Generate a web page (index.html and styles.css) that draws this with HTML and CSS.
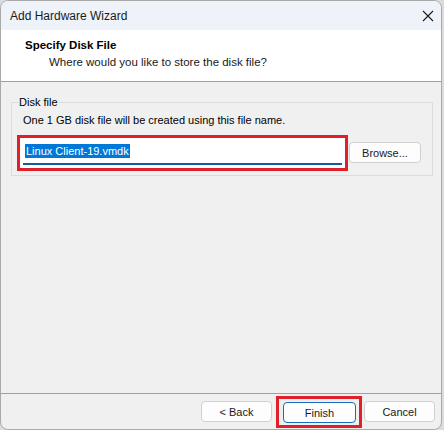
FILE: index.html
```html
<!DOCTYPE html>
<html>
<head>
<meta charset="utf-8">
<link rel="stylesheet" href="styles.css">
</head>
<body>
<div class="window">
  <div class="titlebar">
    <span class="title">Add Hardware Wizard</span>
    <svg class="close" width="12" height="12" viewBox="0 0 12 12"><path d="M1 1L11 11M11 1L1 11" stroke="#1a1a1a" stroke-width="1.1" fill="none"/></svg>
  </div>
  <div class="header">
    <div class="h-title">Specify Disk File</div>
    <div class="h-sub">Where would you like to store the disk file?</div>
  </div>
  <div class="content">
    <fieldset class="group">
      <legend>Disk file</legend>
      <div class="desc">One 1 GB disk file will be created using this file name.</div>
      <div class="row">
        <div class="mark mark-input">
          <div class="input"><span class="sel">Linux Client-19.vmdk</span></div>
        </div>
        <div class="btn browse">Browse...</div>
      </div>
    </fieldset>
  </div>
  <div class="footer">
    <div class="btn">&lt; Back</div>
    <div class="mark mark-btn"><div class="btn primary">Finish</div></div>
    <div class="btn">Cancel</div>
  </div>
</div>
</body>
</html>
```

FILE: styles.css
```css
html, body {
  margin: 0;
  padding: 0;
}
body {
  background: #dcdcdc;
  width: 444px;
  height: 430px;
  font-family: "Liberation Sans", Arial, sans-serif;
  font-size: 11px;
  color: #000;
}
.window {
  box-sizing: border-box;
  width: 442px;
  height: 430px;
  border: 1px solid #a9a9a9;
  border-radius: 8px;
  overflow: hidden;
  display: flex;
  flex-direction: column;
  background: #f0f0f0;
}
.titlebar {
  height: 29px;
  flex: none;
  background: #eef2f9;
  display: flex;
  align-items: center;
  justify-content: space-between;
  padding: 0 7px 0 9px;
}
.title {
  font-size: 12px;
  color: #1b1b1b;
}
.header {
  flex: none;
  height: 52px;
  box-sizing: border-box;
  background: #fff;
  border-bottom: 1px solid #a0a0a0;
  padding: 8px 0 0 24px;
  font-size: 11.5px;
}
.h-title {
  font-weight: bold;
  line-height: 15px;
}
.h-sub {
  padding-left: 24px;
  line-height: 16px;
  margin-top: 1px;
  color: #1a1a1a;
}
.content {
  flex: 1;
  padding: 14px 10px 0 10px;
  border-bottom: 1px solid #a0a0a0;
}
.group {
  margin: 0;
  border: 1px solid #dcdcdc;
  padding: 4px 11px 9px 10px;
  height: 80px;
  box-sizing: border-box;
}
.group legend {
  padding: 0 1px;
  margin-left: -4px;
  line-height: 12px;
}
.desc {
  line-height: 14px;
  margin-top: 1px;
  margin-left: 1px;
}
.row {
  display: flex;
  align-items: flex-start;
  margin-top: 8px;
}
.mark {
  border: 3px solid #e01f2a;
}
.mark-input {
  margin-left: -5px;
  width: 319px;
  height: 29px;
  padding: 1px 3px 0 3px;
  box-sizing: content-box;
  background: #fff;
}
.input {
  box-sizing: border-box;
  height: 26px;
  background: #fff;
  border-bottom: 2px solid #0e5ea5;
  border-radius: 3px 3px 0 0;
  display: flex;
  align-items: center;
  padding-left: 2px;
}
.sel {
  background: #0078d7;
  color: #fff;
  line-height: 14px;
  padding: 0 1px;
}
.btn {
  box-sizing: border-box;
  width: 71px;
  height: 21px;
  border: 1px solid #d0d0d0;
  border-radius: 4px;
  background: #fdfdfd;
  display: flex;
  align-items: center;
  justify-content: center;
  color: #1a1a1a;
}
.browse {
  margin-left: 1px;
  width: 72px;
  margin-top: 7px;
}
.footer {
  flex: none;
  height: 35px;
  display: flex;
  align-items: center;
  justify-content: flex-end;
  padding-right: 6px;
}
.footer > .btn:first-child {
  margin-right: 4px;
}
.footer > .btn:last-child {
  margin-left: 2px;
}
.mark-btn {
  padding: 3px 3px 2px 4px;
  margin-top: 1px;
}
.primary {
  width: 73px;
  border: 1px solid #1a6bc2;
}
```
